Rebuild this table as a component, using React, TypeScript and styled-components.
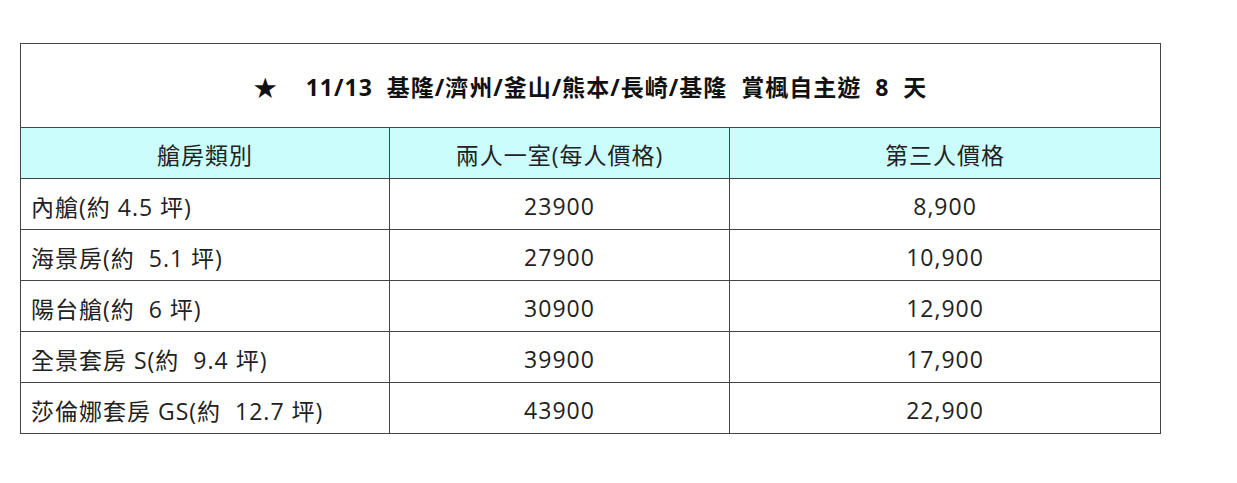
import React from "react";
import styled, { createGlobalStyle } from "styled-components";

const Global = createGlobalStyle`
  html, body { margin: 0; padding: 0; background: #ffffff; }
  body { font-family: "Open Sans", "Noto Sans CJK TC", sans-serif; }
`;

const Page = styled.div`
  padding: 43px 0 0 20px;
`;

const Table = styled.table`
  border-collapse: collapse;
  width: 1140px;
  table-layout: fixed;
  color: #222;
  font-size: 23px;
  letter-spacing: 1px;
`;

const Col = styled.col<{ $w: number }>`
  width: ${(p) => p.$w}px;
`;

const TitleCell = styled.td`
  height: 84px;
  border: 1px solid #444;
  text-align: center;
  font-weight: bold;
  color: #111;
  padding: 1px 0 0 0;
  box-sizing: border-box;
  white-space: pre;
`;

const HeadCell = styled.th`
  height: 51px;
  box-sizing: border-box;
  border: 1px solid #444;
  background: #ccfdfd;
  font-weight: normal;
  text-align: center;
  padding: 1px 0 0 0;
`;

const Cell = styled.td<{ $left?: boolean }>`
  height: 51px;
  box-sizing: border-box;
  border: 1px solid #444;
  text-align: ${(p) => (p.$left ? "left" : "center")};
  padding: 4px 0 0 ${(p) => (p.$left ? "10px" : "0")};
  white-space: pre;
`;

const rows = [
  ["內艙(約 4.5 坪)", "23900", "8,900"],
  ["海景房(約  5.1 坪)", "27900", "10,900"],
  ["陽台艙(約  6 坪)", "30900", "12,900"],
  ["全景套房 S(約  9.4 坪)", "39900", "17,900"],
  ["莎倫娜套房 GS(約  12.7 坪)", "43900", "22,900"],
];

export default function App() {
  return (
    <Page>
      <Global />
      <Table>
        <colgroup>
          <Col $w={369} />
          <Col $w={340} />
          <Col $w={431} />
        </colgroup>
        <thead>
          <tr>
            <TitleCell colSpan={3}>{"★    11/13  基隆/濟州/釜山/熊本/長崎/基隆  賞楓自主遊  8  天"}</TitleCell>
          </tr>
          <tr>
            <HeadCell>艙房類別</HeadCell>
            <HeadCell>兩人一室(每人價格)</HeadCell>
            <HeadCell>第三人價格</HeadCell>
          </tr>
        </thead>
        <tbody>
          {rows.map((r) => (
            <tr key={r[0]}>
              <Cell $left>{r[0]}</Cell>
              <Cell>{r[1]}</Cell>
              <Cell>{r[2]}</Cell>
            </tr>
          ))}
        </tbody>
      </Table>
    </Page>
  );
}
